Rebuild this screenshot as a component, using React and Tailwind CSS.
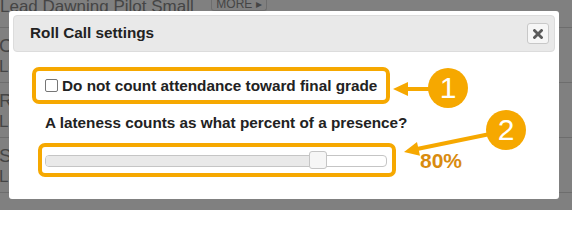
const ORANGE = "#f6a800";

const rows = [
  { name: "Claire Dunmore", sub: "Lecture 1 · Present" },
  { name: "Rita Falconer", sub: "Lecture 1 · Late" },
  { name: "Steven Hale", sub: "Lecture 1 · Absent" },
];

function PageBehind() {
  return (
    <div className="flex flex-col text-[#454545]">
      <div className="h-[28px] border-b border-[#6d6d6d] flex items-start">
        <div className="w-[211px] text-[17px] leading-[14px] mt-[0px] whitespace-nowrap">Lead Dawning Pilot Small</div>
        <div className="w-[56px] h-[11px] border border-t-0 border-[#6d6d6d] rounded-b-[3px] flex items-end justify-center text-[12px] leading-[12px] overflow-hidden">
          MORE ▸
        </div>
      </div>
      {rows.map((r) => (
        <div key={r.name} className="h-[55px] border-b border-[#6d6d6d] pt-[7px] -ml-[1px] whitespace-nowrap">
          <div className="text-[19px] leading-[22px]">{r.name}</div>
          <div className="text-[17px] leading-[20px]">{r.sub}</div>
        </div>
      ))}
    </div>
  );
}

function CloseIcon() {
  return (
    <svg width="10" height="10" viewBox="0 0 10 10">
      <path d="M1.5 1.5 L8.5 8.5 M8.5 1.5 L1.5 8.5" stroke="#5a5a5a" strokeWidth="2.8" strokeLinecap="square" />
    </svg>
  );
}

function Dialog() {
  return (
    <div className="absolute left-[9px] top-[11px] w-[550px] h-[188px] bg-white rounded-[3px] p-[4px] text-[#222]">
      <div className="h-[37px] bg-[#e9e9e9] border border-[#dcdcdc] rounded-[4px] flex items-center justify-between pl-[16px] pr-[5px]">
        <span className="text-[15.3px] leading-[17px] font-bold -mt-[2px]">Roll Call settings</span>
        <button className="w-[22px] h-[21px] bg-[#f6f6f6] border border-[#c8c8c8] rounded-[3px] flex items-center justify-center">
          <CloseIcon />
        </button>
      </div>

      <div className="mt-[15px] ml-[19px] w-[358px] h-[37px] border-4 border-[#f6a800] rounded-[7px] flex items-center pl-[9px] gap-[4px]">
        <span className="w-[13px] h-[13px] border border-[#767676] rounded-[2px] bg-white" />
        <span className="text-[15.3px] leading-[17px] font-bold whitespace-nowrap">Do not count attendance toward final grade</span>
      </div>

      <div className="mt-[10px] ml-[32px] text-[15.3px] leading-[17px] font-bold whitespace-nowrap">
        A lateness counts as what percent of a presence?
      </div>

      <div className="mt-[12px] ml-[25px] w-[358px] h-[34px] border-4 border-[#f6a800] rounded-[7px] flex items-center pl-[3px] pt-[2px]">
        <div className="relative w-[342px] h-[12px] border border-[#c5c5c5] rounded-[4px] bg-white">
          <div className="h-full w-[80%] bg-[#e9e9e9] rounded-l-[3px]" />
          <div className="absolute top-[-5px] left-[calc(80%-9px)] w-[18px] h-[18px] bg-[#f6f6f6] border border-[#c5c5c5] rounded-[3px]" />
        </div>
      </div>
    </div>
  );
}

function Annotations() {
  return (
    <>
      <svg className="absolute left-0 top-0" width="572" height="210" viewBox="0 0 572 210">
        <line x1="405" y1="89" x2="432" y2="89" stroke={ORANGE} strokeWidth="4" />
        <polygon points="393,89 408,82 408,96" fill={ORANGE} />
        <line x1="417" y1="149" x2="490" y2="134" stroke={ORANGE} strokeWidth="4" />
        <polygon points="404,152 420,155.7 417,142" fill={ORANGE} />
      </svg>
      <div className="absolute left-[428px] top-[68px] w-[40px] h-[40px] rounded-full bg-[#f6a800] flex items-center justify-center text-white text-[30px] leading-none">
        1
      </div>
      <div className="absolute left-[486px] top-[110px] w-[40px] h-[40px] rounded-full bg-[#f6a800] flex items-center justify-center text-white text-[30px] leading-none">
        2
      </div>
      <div className="absolute left-[420px] top-[150px] text-[21px] leading-[21px] font-bold text-[#d98b0f]">80%</div>
    </>
  );
}

export default function App() {
  return (
    <div
      className="relative w-[572px] h-[210px] overflow-hidden bg-[#808080]"
      style={{ fontFamily: '"Liberation Sans", Arial, sans-serif' }}
    >
      <PageBehind />
      <Dialog />
      <Annotations />
    </div>
  );
}
